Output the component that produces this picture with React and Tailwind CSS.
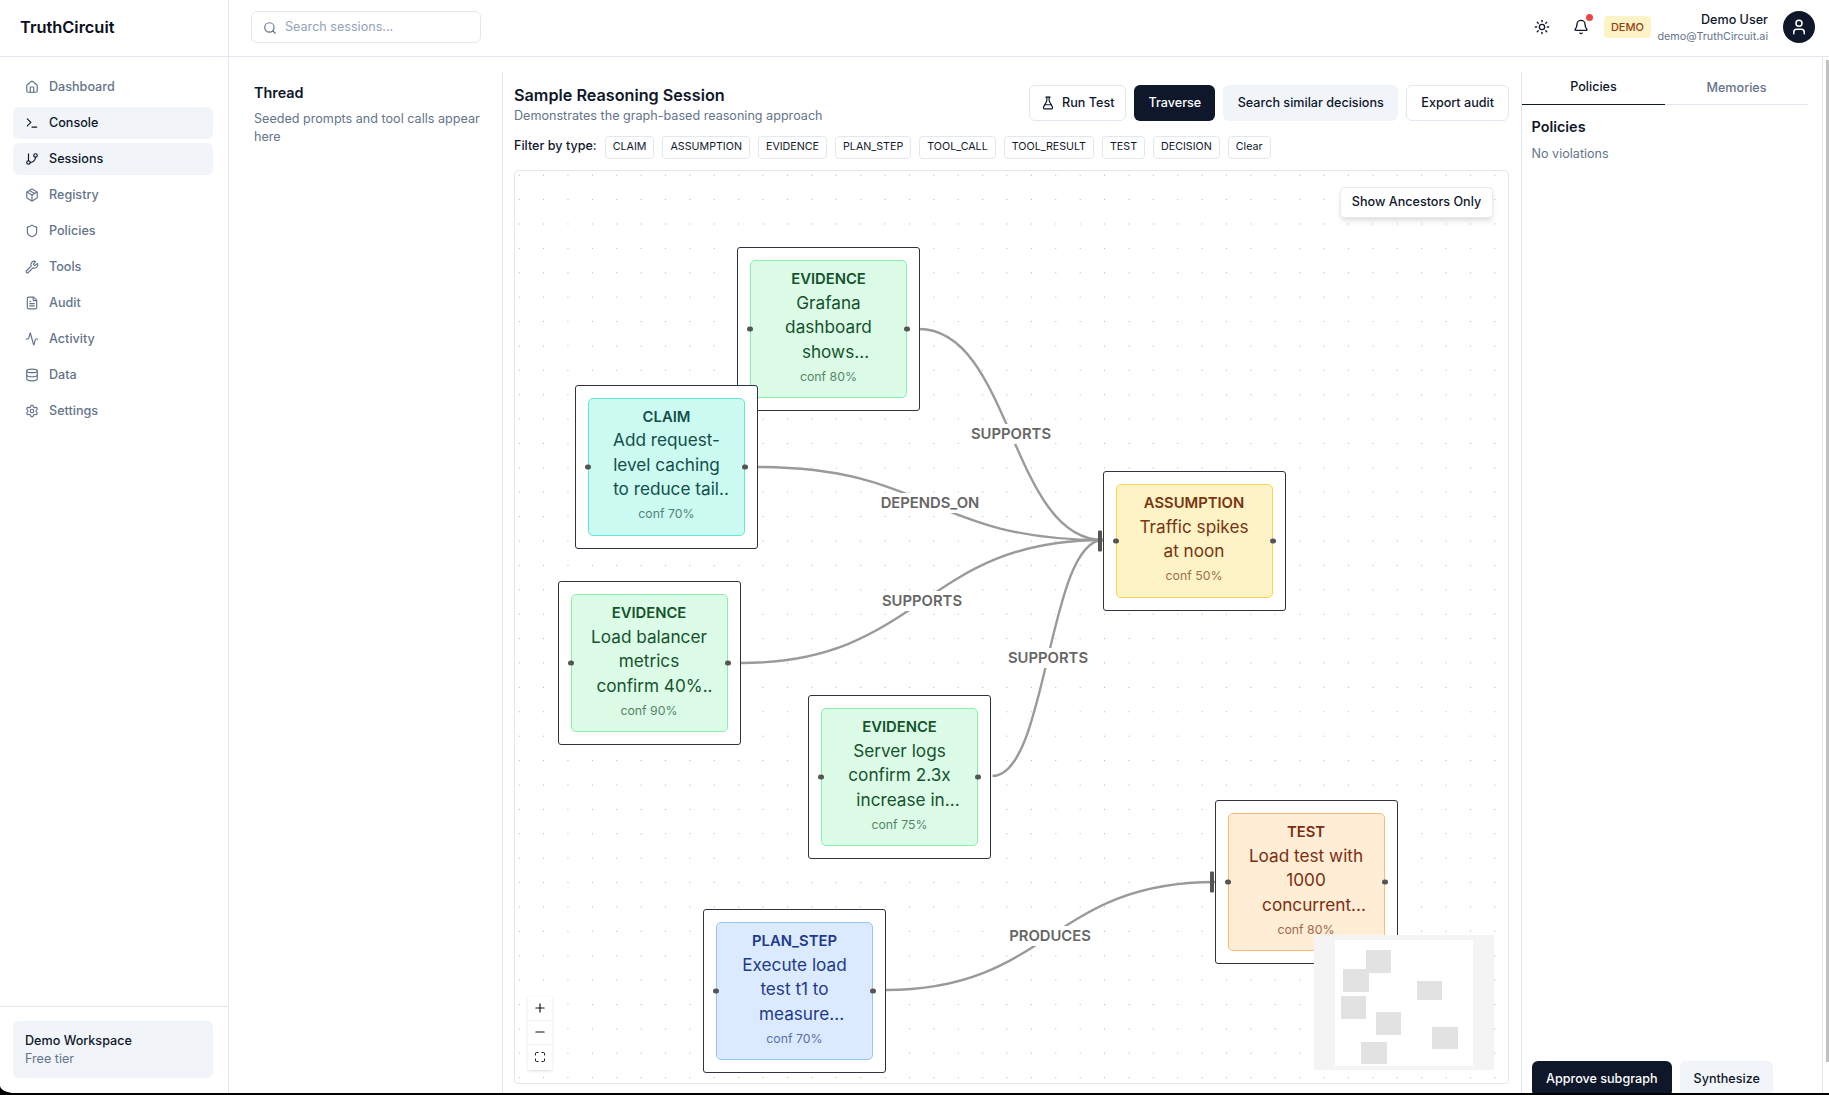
import React from 'react';
import {
  Activity, Bell, Database, FileText, FlaskConical, GitBranch, House, Maximize, Minus, Package,
  Plus, Search, Settings, Shield, Sun, Terminal, User, Wrench,
} from 'lucide-react';

const navItems = [
  { label: 'Dashboard', icon: House },
  { label: 'Console', icon: Terminal, active: true },
  { label: 'Sessions', icon: GitBranch, active: true },
  { label: 'Registry', icon: Package },
  { label: 'Policies', icon: Shield },
  { label: 'Tools', icon: Wrench },
  { label: 'Audit', icon: FileText },
  { label: 'Activity', icon: Activity },
  { label: 'Data', icon: Database },
  { label: 'Settings', icon: Settings },
];

const filters = ['CLAIM', 'ASSUMPTION', 'EVIDENCE', 'PLAN_STEP', 'TOOL_CALL', 'TOOL_RESULT', 'TEST', 'DECISION', 'Clear'];

const nodes = [
  {
    pos: 'left-[222px] top-[76px]', box: 'bg-[#dcfce7] border-[#86efac] text-[#14532d]', type: 'EVIDENCE', conf: 80,
    lines: [['Grafana'], ['dashboard'], ['shows...', 'pl-[14px]']],
  },
  {
    pos: 'left-[60px] top-[213.5px]', box: 'bg-[#ccfbf1] border-[#5eead4] text-[#134e4a]', type: 'CLAIM', conf: 70,
    lines: [['Add request-'], ['level caching'], ['to reduce tail..', 'pl-[9px] whitespace-nowrap']],
  },
  {
    pos: 'left-[587.5px] top-[300px]', box: 'bg-[#fef3c7] border-[#fcd34d] text-[#78350f]', type: 'ASSUMPTION', conf: 50, bar: true,
    lines: [['Traffic spikes'], ['at noon']],
  },
  {
    pos: 'left-[42.5px] top-[410px]', box: 'bg-[#dcfce7] border-[#86efac] text-[#14532d]', type: 'EVIDENCE', conf: 90,
    lines: [['Load balancer'], ['metrics'], ['confirm 40%..', 'pl-[11px] whitespace-nowrap']],
  },
  {
    pos: 'left-[293px] top-[524px]', box: 'bg-[#dcfce7] border-[#86efac] text-[#14532d]', type: 'EVIDENCE', conf: 75,
    lines: [['Server logs'], ['confirm 2.3x'], ['increase in...', 'pl-[17px] whitespace-nowrap']],
  },
  {
    pos: 'left-[699.5px] top-[629px]', box: 'bg-[#ffedd5] border-[#fdba74] text-[#7c2d12]', type: 'TEST', conf: 80, bar: true,
    lines: [['Load test with'], ['1000'], ['concurrent...', 'pl-[16px] whitespace-nowrap']],
  },
  {
    pos: 'left-[188px] top-[738px]', box: 'bg-[#dbeafe] border-[#93c5fd] text-[#1e3a8a]', type: 'PLAN_STEP', conf: 70,
    lines: [['Execute load'], ['test t1 to'], ['measure...', 'pl-[14px]']],
  },
];

const edges = [
  'M404,158 C496,158 496,369 588,369',
  'M242,296 C415,296 415,369 588,369',
  'M226,492 C407,492 407,369 588,369',
  'M477.5,605 C532.75,605 532.75,369 588,369',
  'M370,819 C535,819 535,711 700,711',
];

const edgeLabels = [
  { text: 'SUPPORTS', pos: 'left-[496px] top-[263px]' },
  { text: 'DEPENDS_ON', pos: 'left-[415px] top-[332px]' },
  { text: 'SUPPORTS', pos: 'left-[407px] top-[430px]' },
  { text: 'SUPPORTS', pos: 'left-[533px] top-[487px]' },
  { text: 'PRODUCES', pos: 'left-[535px] top-[765px]' },
];

const miniRects = [
  [52, 15, 25, 23], [29, 34, 26, 23], [103, 46, 25, 19], [27, 61, 25, 23],
  [62, 77, 25, 23], [118, 92, 26, 22], [47, 107, 26, 22],
];

const GraphNode = ({ node }) => (
  <div className={`absolute w-[183px] bg-white border-[1.5px] border-[#2d3340] rounded-[3px] p-[12px] ${node.pos}`}>
    {node.bar && <div className="absolute -left-[5.5px] top-1/2 -translate-y-1/2 w-[4px] h-[21px] bg-[#555] rounded-[1px]" />}
    <div className={`relative border-[1.5px] rounded-[5px] pt-[8px] pb-[12.5px] text-center ${node.box}`}>
      <div className="absolute -left-[4px] top-1/2 -translate-y-1/2 w-[6px] h-[5px] rounded-full bg-[#555]" />
      <div className="absolute -right-[4px] top-1/2 -translate-y-1/2 w-[6px] h-[5px] rounded-full bg-[#555]" />
      <div className="text-[14.8px] leading-[20px] font-semibold">{node.type}</div>
      <div className="mt-[1.5px]">
        {node.lines.map(([text, extra]) => (
          <div key={text} className={`text-[17.2px] leading-[24.6px] ${extra || ''}`}>{text}</div>
        ))}
      </div>
      <div className="mt-[4.5px] text-[12.3px] leading-[16px] opacity-70">conf {node.conf}%</div>
    </div>
  </div>
);

const Canvas = () => (
  <div className="relative mt-[11px] h-[914px] border border-[#e2e8f0] rounded-[4px] overflow-hidden bg-white bg-[radial-gradient(#adb1b8_0.7px,transparent_0.8px)] bg-[size:24.4px_24.4px] bg-[position:-8px_-8px]">
    <svg className="absolute inset-0" width="993" height="912" fill="none">
      {edges.map((d) => (
        <path key={d} d={d} stroke="#9a9a9a" strokeWidth="2.4" />
      ))}
    </svg>
    {edgeLabels.map((label) => (
      <div key={label.pos} className={`absolute -translate-x-1/2 -translate-y-1/2 bg-white px-[3px] text-[14.8px] leading-[20px] font-semibold text-[#666] whitespace-nowrap ${label.pos}`}>
        {label.text}
      </div>
    ))}
    {nodes.map((node) => (
      <GraphNode key={node.pos} node={node} />
    ))}
    <button className="absolute left-[825px] top-[16px] w-[153px] h-[31px] bg-white rounded-[4px] border border-[#e8ebf0] shadow-md text-[12.6px] font-medium text-[#0f172a] flex items-center justify-center">
      Show Ancestors Only
    </button>
    <div className="absolute left-[13px] top-[825px] w-[24px] shadow-sm bg-white text-[#111]">
      <div className="h-[24.5px] flex items-center justify-center border-b border-[#f1f1f1]"><Plus size={14} /></div>
      <div className="h-[24.5px] flex items-center justify-center border-b border-[#f1f1f1]"><Minus size={14} /></div>
      <div className="h-[24.5px] flex items-center justify-center"><Maximize size={12} /></div>
    </div>
    <svg className="absolute left-[799px] top-[764px]" width="180" height="135">
      <rect width="180" height="135" fill="#f4f4f5" />
      <rect x="21" y="5" width="138" height="126" fill="#fff" />
      {miniRects.map(([x, y, w, h]) => (
        <rect key={`${x}-${y}`} x={x} y={y} width={w} height={h} fill="#e2e2e2" />
      ))}
    </svg>
  </div>
);

export default function App() {
  return (
    <div className="relative h-[1095px] flex flex-col overflow-hidden bg-white text-[#0f172a] font-['Inter',sans-serif]">
      <header className="h-[57px] shrink-0 flex items-center border-b border-[#e2e8f0]">
        <div className="w-[229px] h-full shrink-0 flex items-center pl-[20px] pb-[1px] border-r border-[#e2e8f0] text-[16.4px] font-semibold text-[#0a0f1c]">
          TruthCircuit
        </div>
        <div className="ml-[22px] mb-[2px] w-[230px] h-[32px] flex items-center gap-[8px] px-[11px] pt-[1px] border border-[#e2e8f0] rounded-[6px]">
          <Search size={14} className="text-[#64748b]" />
          <span className="text-[12.6px] text-[#94a3b8]">Search sessions...</span>
        </div>
        <div className="ml-auto mb-[2px] flex items-center pr-[14px]">
          <Sun size={16} className="text-[#0f172a] mr-[23px]" />
          <div className="relative mr-[14.5px]">
            <Bell size={16} className="text-[#0f172a]" />
            <div className="absolute -top-[5px] -right-[4px] w-[7px] h-[7px] rounded-full bg-[#ef4444]" />
          </div>
          <div className="w-[47px] h-[22px] rounded-[4px] bg-[#fef3c7] text-[#92400e] text-[11px] font-medium flex items-center justify-center">DEMO</div>
          <div className="ml-[6.5px] text-right">
            <div className="text-[12.6px] leading-[18px] font-medium">Demo User</div>
            <div className="text-[10.8px] leading-[15px] text-[#64748b]">demo@TruthCircuit.ai</div>
          </div>
          <div className="ml-[15px] w-[32px] h-[32px] rounded-full bg-[#0f172a] flex items-center justify-center">
            <User size={18} className="text-white" />
          </div>
        </div>
      </header>

      <div className="flex-1 min-h-0 flex">
        <aside className="w-[229px] shrink-0 flex flex-col border-r border-[#e2e8f0]">
          <nav className="flex-1 pt-[14px] pl-[13px] pr-[15px] flex flex-col gap-[4px]">
            {navItems.map(({ label, icon: Icon, active }) => (
              <div key={label} className={`h-[32px] flex items-center gap-[10px] px-[12px] rounded-[6px] text-[12.6px] font-medium ${active ? 'bg-[#f1f5f9] text-[#0f172a]' : 'text-[#64748b]'}`}>
                <Icon size={14} />
                {label}
              </div>
            ))}
          </nav>
          <div className="h-[87px] shrink-0 border-t border-[#e2e8f0] pt-[14px] pl-[13px] pr-[15px]">
            <div className="h-[57px] rounded-[6px] bg-[#f1f5f9] px-[12px] flex flex-col justify-center">
              <div className="text-[12.6px] leading-[19px] font-medium">Demo Workspace</div>
              <div className="text-[12.6px] leading-[18px] text-[#64748b]">Free tier</div>
            </div>
          </div>
        </aside>

        <main className="flex-1 min-w-0 flex pt-[15px]">
          <section className="w-[274px] shrink-0 border-r border-[#e2e8f0] pl-[25px] pr-[20px] pt-[9px]">
            <h2 className="text-[14.4px] leading-[24px] font-semibold">Thread</h2>
            <p className="mt-[5px] text-[12.6px] leading-[18px] text-[#64748b]">Seeded prompts and tool calls appear here</p>
          </section>

          <section className="w-[1018px] shrink-0 pl-[11px] pr-[12px] pt-[11px]">
            <div className="flex items-start justify-between">
              <div>
                <h1 className="text-[16.2px] leading-[24px] font-semibold">Sample Reasoning Session</h1>
                <p className="text-[12.6px] leading-[18px] text-[#64748b]">Demonstrates the graph-based reasoning approach</p>
              </div>
              <div className="mt-[2px] flex gap-[8px]">
                <button className="h-[36px] px-[11px] flex items-center gap-[7px] bg-white border border-[#e2e8f0] rounded-[6px] text-[12.6px] font-medium">
                  <FlaskConical size={14} />
                  Run Test
                </button>
                <button className="h-[36px] px-[14px] bg-[#0f172a] text-white rounded-[6px] text-[12.6px] font-medium">Traverse</button>
                <button className="h-[36px] px-[14.5px] bg-[#f1f5f9] rounded-[6px] text-[12.6px] font-medium">Search similar decisions</button>
                <button className="h-[36px] px-[14px] bg-white border border-[#e2e8f0] rounded-[6px] text-[12.6px] font-medium">Export audit</button>
              </div>
            </div>

            <div className="mt-[11px] flex items-start gap-[8px]">
              <span className="text-[12.6px] leading-[20px] font-medium">Filter by type:</span>
              {filters.map((name) => (
                <button key={name} className="h-[23px] px-[7px] bg-white border border-[#e2e8f0] rounded-[4px] text-[10.7px] font-normal text-[#0f172a]">
                  {name}
                </button>
              ))}
            </div>

            <Canvas />
          </section>

          <section className="flex-1 min-w-0 border-l border-[#e2e8f0] pr-[14px]">
            <div className="grid grid-cols-2 h-[33px] text-[12.6px] font-medium">
              <div className="flex items-center justify-center border-b-[1.5px] border-[#0f172a] pb-[2px]">Policies</div>
              <div className="flex items-center justify-center border-b border-[#e2e8f0] text-[#64748b]">Memories</div>
            </div>
            <div className="h-[956px] pl-[9.5px] pt-[10px]">
              <h3 className="text-[14.4px] leading-[24px] font-semibold">Policies</h3>
              <p className="mt-[5px] text-[12.6px] leading-[20px] text-[#64748b]">No violations</p>
            </div>
            <div className="flex gap-[8px] pl-[9.5px]">
              <button className="h-[36px] px-[14.5px] bg-[#0f172a] text-white rounded-[6px] text-[12.6px] font-medium">Approve subgraph</button>
              <button className="h-[36px] px-[13.5px] bg-[#f1f5f9] rounded-[6px] text-[12.6px] font-medium">Synthesize</button>
            </div>
          </section>
        </main>

        <div className="w-[7px] shrink-0 border-l border-[#e2e8f0]">
          <div className="ml-auto mt-[3px] w-[3px] h-[1002px] bg-[#c1c1c1]" />
        </div>
      </div>

      <div className="h-[2px] shrink-0 bg-black" />
      <svg className="absolute left-0 bottom-[2px]" width="12" height="7">
        <path d="M0,0 C1,4 6,6 12,7 L0,7 Z" fill="#000" />
      </svg>
    </div>
  );
}
